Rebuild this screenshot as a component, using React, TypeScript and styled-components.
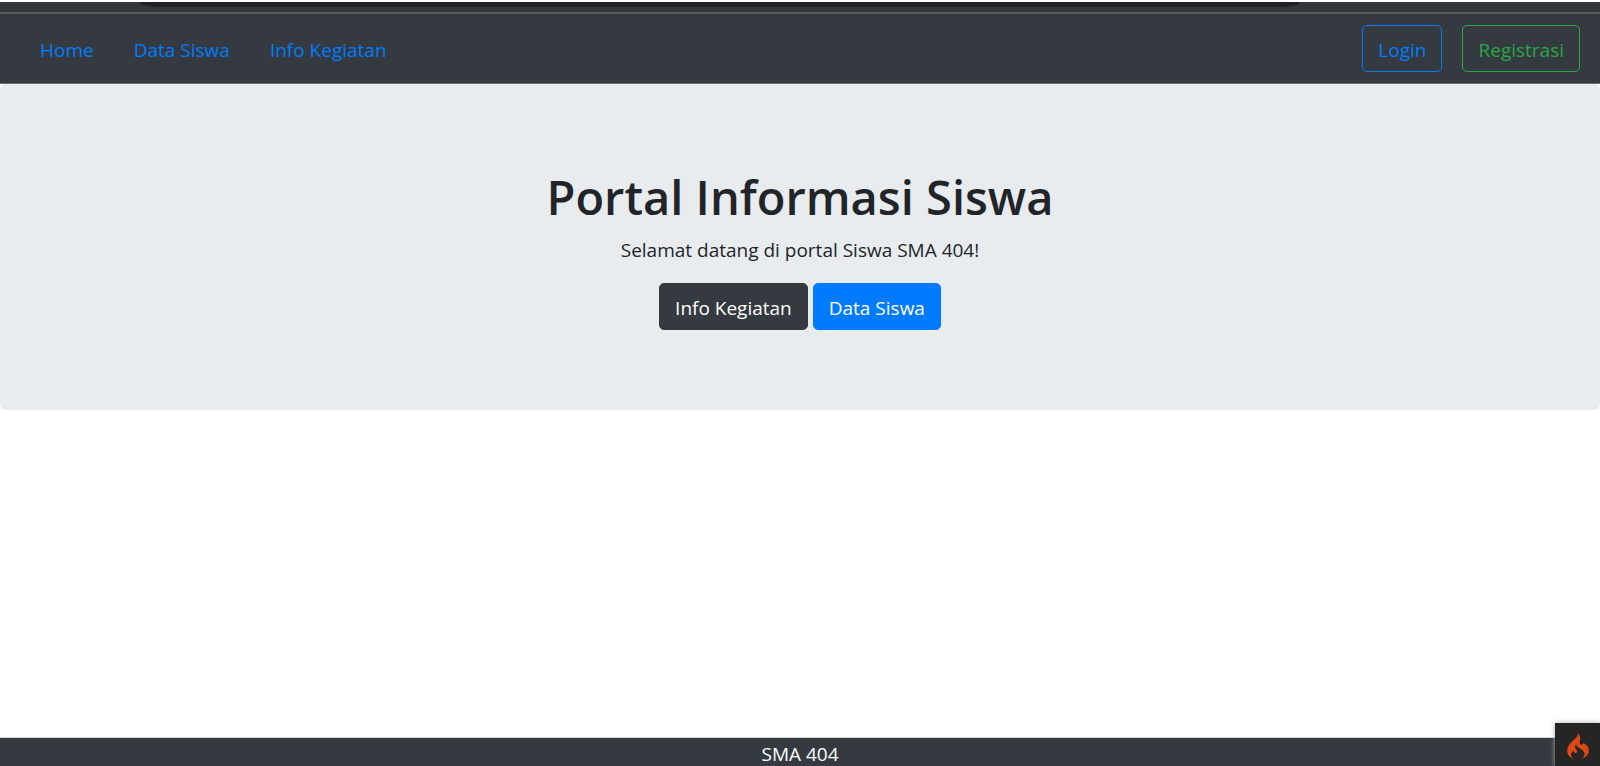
import React from "react";
import styled, { createGlobalStyle } from "styled-components";
import { SiCodeigniter } from "react-icons/si";

const GlobalStyle = createGlobalStyle`
  *, *::before, *::after { box-sizing: border-box; }
  body {
    margin: 0;
    background: #fff;
    color: #212529;
    font-family: "Open Sans", "Noto Sans", sans-serif;
    font-size: 19px;
    line-height: 30px;
  }
`;

const Page = styled.div`
  display: flex;
  flex-direction: column;
  min-height: 100vh;
  padding-top: 2px;
`;

const BrowserStrip = styled.div`
  height: 12px;
  padding: 0 300px 0 140px;
  background: #35363a;
  border-bottom: 2px solid #585b5e;
`;

const AddressEdge = styled.div`
  height: 5px;
  background: #202124;
  border-radius: 0 0 16px 16px / 0 0 5px 5px;
`;

const Navbar = styled.nav`
  display: flex;
  align-items: center;
  justify-content: space-between;
  height: 70px;
  padding: 0 20px;
  background: #343a40;
  border-bottom: 1px solid #6c7176;
`;

const NavGroup = styled.div<{ $gap: number }>`
  display: flex;
  gap: ${({ $gap }) => $gap}px;
`;

const NavLink = styled.a`
  padding: 11px 20px 9px;
  color: #007bff;
  text-decoration: none;
`;

const Button = styled.button<{ $color: string; $filled?: boolean }>`
  height: 47px;
  padding: 2px 15px 0;
  border: 1px solid ${({ $color }) => $color};
  border-radius: 5px;
  background: ${({ $color, $filled }) => ($filled ? $color : "transparent")};
  color: ${({ $color, $filled }) => ($filled ? "#fff" : $color)};
  font: inherit;
  cursor: pointer;
`;

const Hero = styled.header`
  padding: 83px 40px 80px;
  background: #e9ecef;
  border-radius: 6px;
  text-align: center;
`;

const Title = styled.h1`
  margin: 0 0 8px;
  font-size: 47px;
  font-weight: 600;
  line-height: 60px;
`;

const Lead = styled.p`
  margin: 0 0 18px;
`;

const HeroActions = styled.div`
  display: flex;
  justify-content: center;
  gap: 5px;
`;

const Footer = styled.footer`
  height: 29px;
  margin-top: auto;
  border-top: 1px solid #d5d7d9;
  background: #343a40;
  color: #fff;
  line-height: 28px;
  padding-top: 2px;
  text-align: center;
`;

const DebugButton = styled.button`
  position: fixed;
  right: 0;
  bottom: 0;
  display: flex;
  align-items: center;
  justify-content: center;
  width: 45px;
  height: 43px;
  padding: 2px 0 0;
  border: 0;
  background: #252525;
  box-shadow: 0 0 5px #aaa;
  color: #dd4814;
  cursor: pointer;
`;

export default function App() {
  return (
    <>
      <GlobalStyle />
      <Page>
        <BrowserStrip>
          <AddressEdge />
        </BrowserStrip>
        <Navbar>
          <NavGroup $gap={0}>
            <NavLink href="#home">Home</NavLink>
            <NavLink href="#siswa">Data Siswa</NavLink>
            <NavLink href="#kegiatan">Info Kegiatan</NavLink>
          </NavGroup>
          <NavGroup $gap={20}>
            <Button type="button" $color="#007bff">Login</Button>
            <Button type="button" $color="#28a745">Registrasi</Button>
          </NavGroup>
        </Navbar>
        <Hero>
          <Title>Portal Informasi Siswa</Title>
          <Lead>Selamat datang di portal Siswa SMA 404!</Lead>
          <HeroActions>
            <Button type="button" $color="#343a40" $filled>Info Kegiatan</Button>
            <Button type="button" $color="#007bff" $filled>Data Siswa</Button>
          </HeroActions>
        </Hero>
        <Footer>SMA 404</Footer>
      </Page>
      <DebugButton type="button" aria-label="Debug toolbar">
        <SiCodeigniter size={26} />
      </DebugButton>
    </>
  );
}
